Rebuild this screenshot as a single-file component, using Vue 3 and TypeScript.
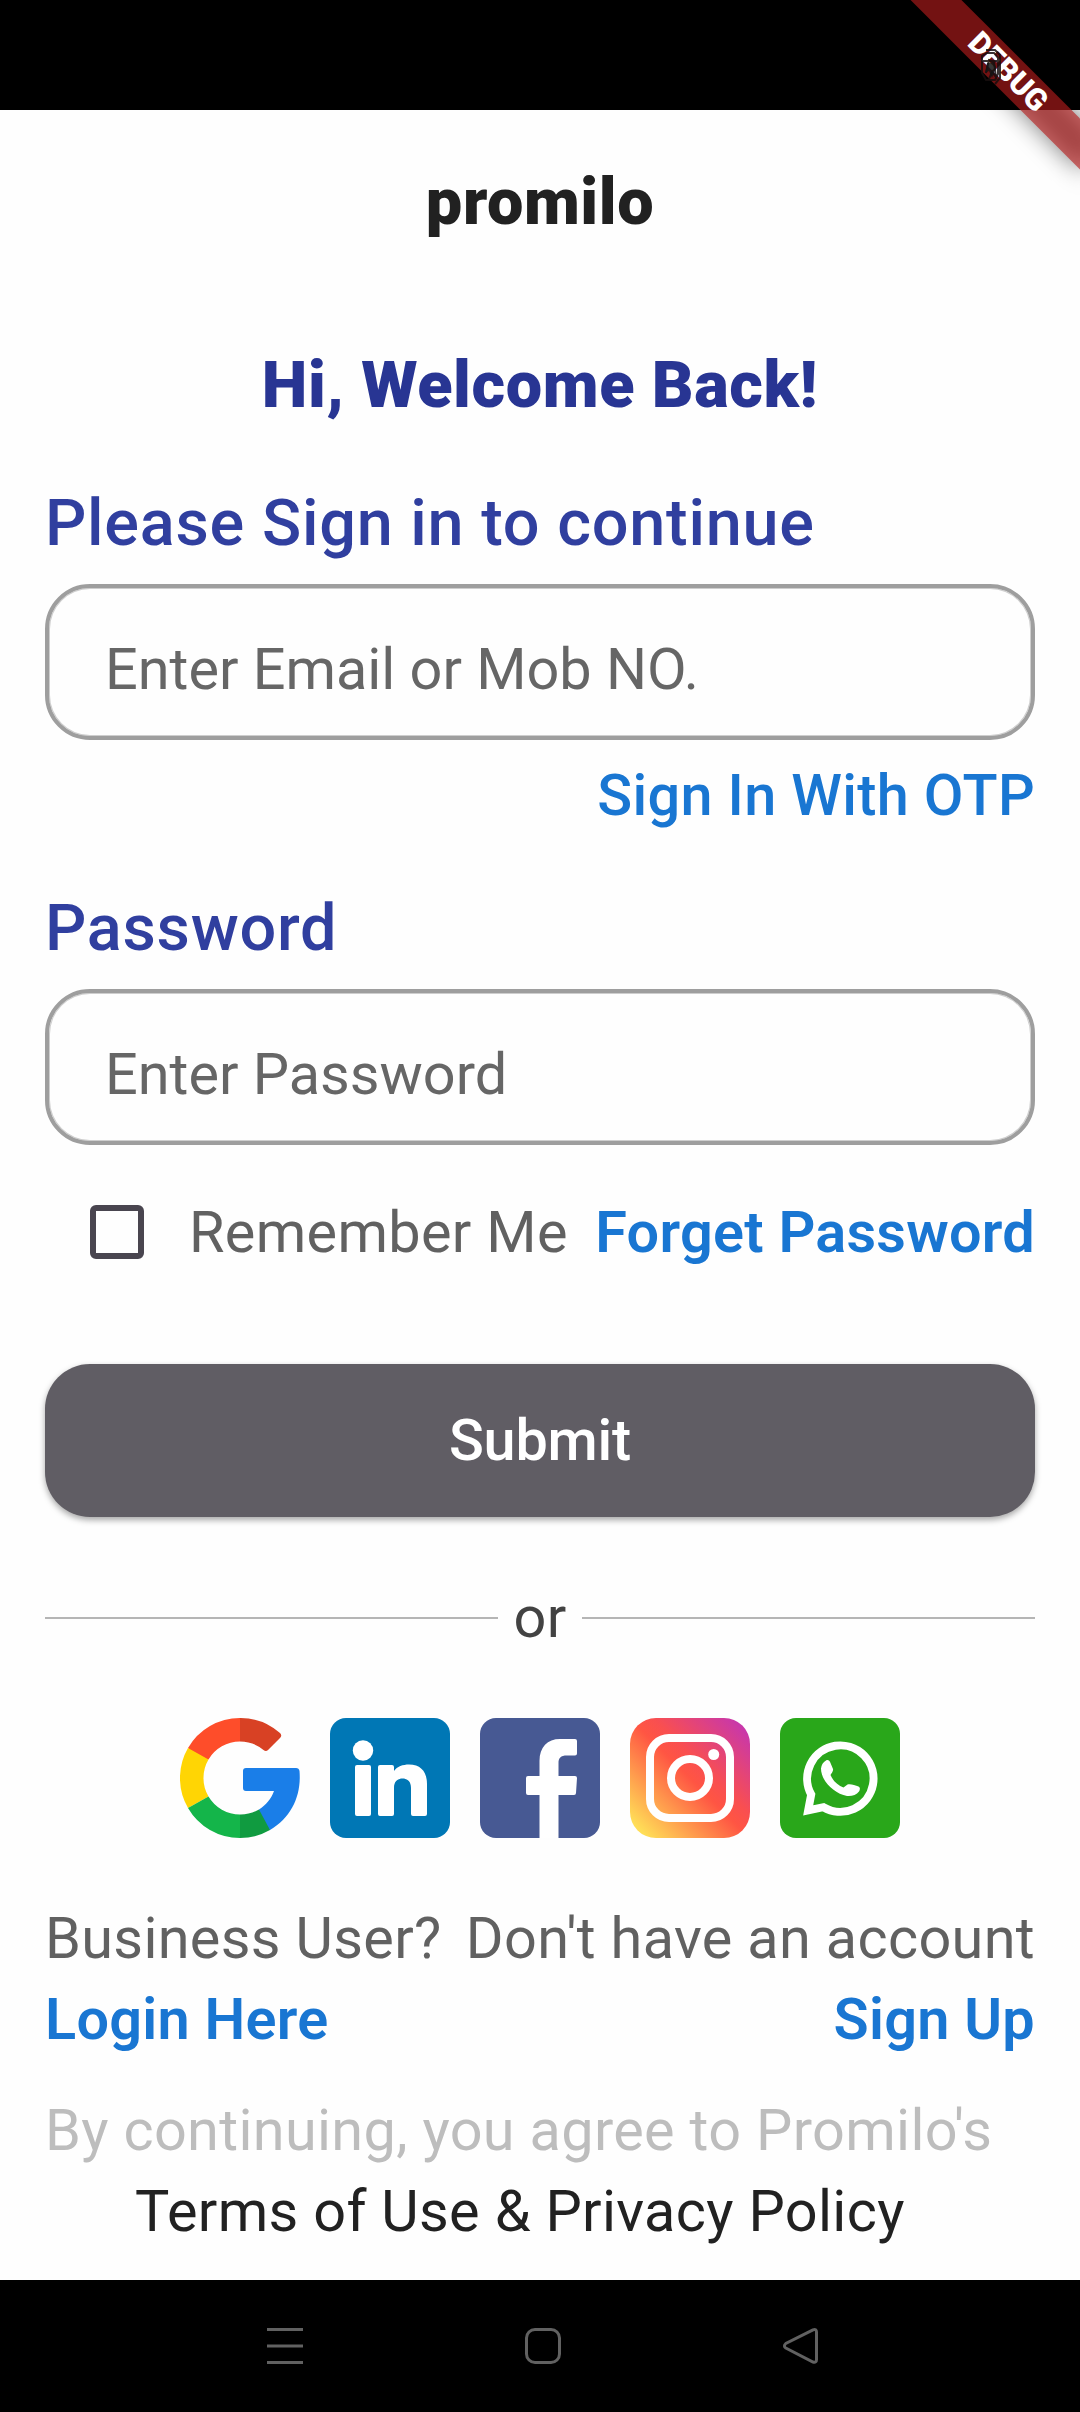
<script setup lang="ts">
import { ref } from 'vue'

const email = ref('')
const password = ref('')
const remember = ref(false)
</script>

<template>
  <div class="screen">
    <div class="status-bar"></div>

    <main class="page">
      <h1 class="brand">promilo</h1>
      <h2 class="welcome">Hi, Welcome Back!</h2>

      <label class="label label-email" for="email">Please Sign in to continue</label>
      <input id="email" v-model="email" class="field" type="text" placeholder="Enter Email or Mob NO." />
      <a class="link otp">Sign In With OTP</a>

      <label class="label label-password" for="password">Password</label>
      <input id="password" v-model="password" class="field" type="password" placeholder="Enter Password" />

      <div class="options">
        <label class="remember">
          <input v-model="remember" class="checkbox" type="checkbox" />
          <span>Remember Me</span>
        </label>
        <a class="link strong">Forget Password</a>
      </div>

      <button class="submit" type="button">Submit</button>

      <div class="divider">
        <span class="rule"></span>
        <span class="or">or</span>
        <span class="rule"></span>
      </div>

      <div class="socials">
        <svg viewBox="0 0 120 120" aria-label="Google">
          <path fill="#fe4d2a" d="M60 0A60 60 0 0 0 8 30L18 40L28.500 41.500A36.500 36.500 0 0 1 60 23.500L64 12Z" />
          <path fill="#d84124" d="M60 0A60 60 0 0 1 100 15Q102.500 17.500 100 20L88 32Q86 34 83.500 32A36.500 36.500 0 0 0 60 23.500Z" />
          <path fill="#ffd504" d="M8 30A60 60 0 0 0 8 90L28.500 78.500A36.500 36.500 0 0 1 28.500 41.500Z" />
          <path fill="#14b54a" d="M8 90A60 60 0 0 0 60 120L63 108L60 96.500A36.500 36.500 0 0 1 28.500 78.500Z" />
          <path fill="#109b40" d="M60 120A60 60 0 0 0 90 112L89 99L79 91.500A36.500 36.500 0 0 1 60 96.500Z" />
          <path fill="#1a7ee8" d="M66 50H116Q119 50 119.500 53C121.500 77 112 99 90 112L79 91.500C86 87 91 81 94 73H66Q63 73 63 70V53Q63 50 66 50Z" />
        </svg>
        <svg viewBox="0 0 120 120" aria-label="LinkedIn">
          <rect width="120" height="120" rx="16" fill="#0077b5" />
          <circle cx="33" cy="32.500" r="10.200" fill="#fff" />
          <rect x="25" y="47" width="16" height="51" rx="2" fill="#fff" />
          <path fill="#fff" d="M50 47H62Q64 47 64 49V53C67 48.500 73 46.500 79 46.500C91 46.500 97 54 97 66V96Q97 98 95 98H83Q81 98 81 96V70C81 64 78 60.500 72.500 60.500C67 60.500 64 64 64 70V96Q64 98 62 98H50Q48 98 48 96V49Q48 47 50 47Z" />
        </svg>
        <svg viewBox="0 0 120 120" aria-label="Facebook">
          <rect width="120" height="120" rx="16" fill="#475993" />
          <path fill="#fff" d="M59.500 120V77H48Q46 77 46 75V60Q46 58 48 58H59.500V43C59.500 29 67.500 21 80 21H95Q97 21 97 23V35.500Q97 37.500 95 37.500H87C80.500 37.500 78.500 40 78.500 45V58H95Q97 58 97 60L96 75Q96 77 94 77H78.500V120Z" />
        </svg>
        <svg viewBox="0 0 120 120" aria-label="Instagram">
          <defs>
            <linearGradient id="insta" x1="2" y1="118" x2="118" y2="2" gradientUnits="userSpaceOnUse">
              <stop offset="0.060" stop-color="#ffde57" />
              <stop offset="0.500" stop-color="#ff5543" />
              <stop offset="0.600" stop-color="#f94f50" />
              <stop offset="0.950" stop-color="#c837ab" />
            </linearGradient>
          </defs>
          <rect width="120" height="120" rx="26" fill="url(#insta)" />
          <rect x="20" y="20" width="80" height="80" rx="19" fill="none" stroke="#fff" stroke-width="8" />
          <circle cx="60" cy="60" r="19" fill="none" stroke="#fff" stroke-width="8" />
          <circle cx="83.700" cy="36.500" r="5.500" fill="#fff" />
        </svg>
        <svg viewBox="0 0 120 120" aria-label="WhatsApp">
          <rect width="120" height="120" rx="16" fill="#29a71a" />
          <path fill="none" stroke="#fff" stroke-width="8" d="M28.200 92.300L31.200 76.500A33.200 33.200 0 1 1 43.500 89.200Z" />
          <path fill="#fff" d="M46 42.500C48 41.500 49.500 42.500 50.300 44.500L53 51C53.500 53 51.500 55 50.500 57C53 63 58 67.500 63.500 69.500L67.500 66.500C70 65.500 75 67 78.500 68.500C80.500 69.500 80 71.500 79 73.500C76.500 77 71.500 78.500 67 78C54 75.500 41 63 41 50.500C41.500 47 43 44 46 42.500Z" />
        </svg>
      </div>

      <div class="accounts">
        <div class="account">
          <span>Business User?</span>
          <a class="link strong">Login Here</a>
        </div>
        <div class="account right">
          <span>Don't have an account</span>
          <a class="link strong">Sign Up</a>
        </div>
      </div>

      <div class="legal">
        <p class="muted">By continuing, you agree to Promilo's</p>
        <p class="terms">Terms of Use &amp; Privacy Policy</p>
      </div>
    </main>

    <nav class="nav-bar">
      <svg width="38" height="38" viewBox="0 0 38 38" aria-label="Recents">
        <path d="M1 2.500H37M1 19H37M1 35.500H37" />
      </svg>
      <svg width="38" height="38" viewBox="0 0 38 38" aria-label="Home">
        <rect x="2.500" y="2.500" width="33" height="33" rx="8.500" />
      </svg>
      <svg width="38" height="38" viewBox="0 0 38 38" aria-label="Back">
        <path d="M31 2.800L3.800 16.500Q1 19 3.800 21L31 35Q34.500 36 34.500 32.500V5Q34.500 1.500 31 2.800Z" />
      </svg>
    </nav>

    <div class="corner">
      <div class="ribbon-shadow"></div>
      <div class="ribbon">DEBUG</div>
      <svg class="bug" width="24" height="42" viewBox="0 0 24 42" aria-hidden="true">
        <path d="M7 3H16L21 8V31L16 37M3 9V26L7 33H16L19 27V11L15 6H8ZM4 14H20M7 26L10 13L15 15L17 30L13 25L10 32" />
        <path class="solid" d="M8 16L14 15L17 20L13 31L10 24L6 26Z" />
      </svg>
    </div>
  </div>
</template>

<style>
body {
  margin: 0;
  background: #fefefe;
}
</style>

<style scoped>
.screen {
  position: relative;
  display: flex;
  flex-direction: column;
  width: 1080px;
  height: 2412px;
  overflow: hidden;
  background: #fefefe;
  color: #616161;
  font-family: Roboto, sans-serif;
  font-size: 57.6px;
  letter-spacing: 0.34px;
  line-height: 81px;
  white-space: nowrap;
}

.status-bar {
  flex: none;
  height: 110px;
  background: #000;
}

.page {
  display: flex;
  flex: 1;
  flex-direction: column;
  padding: 0 45px;
}

.brand,
.welcome {
  margin: 46px 0 0;
  color: #212121;
  font-size: 64.8px;
  font-weight: 900;
  letter-spacing: 0.6px;
  line-height: 92px;
  text-align: center;
}

.welcome {
  margin-top: 91px;
  color: #283593;
}

.label {
  color: #303f9f;
  font-size: 64.8px;
  font-weight: 500;
  letter-spacing: 0.75px;
  line-height: 92px;
}

.label-email {
  margin-top: 46px;
}

.label-password {
  margin-top: 46px;
}

.field {
  box-sizing: border-box;
  width: 100%;
  height: 156px;
  margin: 15px 0 0;
  padding: 14px 56px 0 56px;
  border: 4px solid #9e9e9e;
  border-radius: 45px;
  outline: none;
  background: transparent;
  box-shadow: inset 0 0 0 1px #cecece;
  color: #212121;
  font: inherit;
  letter-spacing: 0;
}

.field::placeholder {
  color: #666;
  opacity: 1;
}

.link {
  color: #1976d2;
  font-weight: 500;
}

.strong {
  font-weight: 600;
  letter-spacing: 0.26px;
}

.otp {
  align-self: flex-end;
  margin-top: 15px;
}

.options {
  display: flex;
  align-items: center;
  justify-content: space-between;
  height: 82px;
  margin-top: 46px;
}

.remember {
  display: flex;
  align-items: center;
  gap: 45px;
  padding-left: 45px;
}

.checkbox {
  width: 54px;
  height: 54px;
  margin: 0;
  border: 6px solid #49454f;
  border-radius: 6px;
  appearance: none;
}

.submit {
  height: 153px;
  margin: 91px 0 0;
  padding: 0;
  border: 0;
  border-radius: 45px;
  background: #605d64;
  box-shadow: 0 3px 6px rgba(0, 0, 0, 0.35);
  color: #fff;
  font: inherit;
  font-weight: 500;
  letter-spacing: -0.2px;
}

.divider {
  display: flex;
  align-items: center;
  gap: 15px;
  margin-top: 60px;
  color: #424242;
}

.rule {
  flex: 1;
  height: 2px;
  background: #b5b5b5;
}

.socials {
  display: flex;
  justify-content: center;
  gap: 30px;
  margin-top: 60px;
}

.socials svg {
  width: 120px;
  height: 120px;
}

.accounts {
  display: flex;
  justify-content: space-between;
  margin-top: 60px;
}

.account {
  display: flex;
  flex-direction: column;
}

.right {
  align-items: flex-end;
}

.legal {
  margin-top: 30px;
}

.legal p {
  margin: 0;
}

.muted {
  color: #bdbdbd;
}

.terms {
  padding-left: 90px;
  color: #212121;
}

.nav-bar {
  box-sizing: border-box;
  display: flex;
  flex: none;
  justify-content: space-between;
  height: 132px;
  padding: 47px 260px 0 266px;
  background: #000;
}

.nav-bar svg {
  fill: none;
  stroke: #616161;
  stroke-width: 3;
}

.corner {
  position: absolute;
  top: 0;
  right: 0;
  width: 260px;
  height: 260px;
  overflow: hidden;
}

.ribbon,
.ribbon-shadow {
  position: absolute;
  top: 54px;
  left: 68px;
  width: 240px;
  height: 36px;
  transform: rotate(45deg);
}

.ribbon-shadow {
  background: rgba(0, 0, 0, 0.5);
  filter: blur(12px);
}

.ribbon {
  background: rgba(183, 28, 28, 0.627);
  color: #fff;
  font-size: 30.6px;
  font-weight: 900;
  letter-spacing: 0;
  line-height: 36px;
  text-align: center;
}

.bug {
  position: absolute;
  top: 47px;
  left: 159px;
  fill: none;
  stroke: rgba(24, 14, 14, 0.85);
  stroke-width: 2;
}

.bug .solid {
  fill: rgba(20, 20, 20, 0.85);
  stroke: none;
}
</style>
